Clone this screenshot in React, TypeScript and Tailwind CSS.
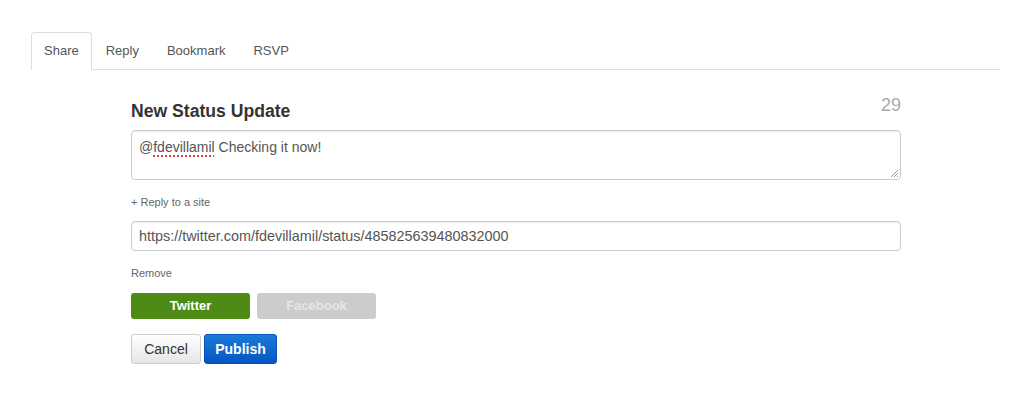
import React from "react";

const tabs = ["Share", "Reply", "Bookmark", "RSVP"];

export default function App() {
  return (
    <div
      className="min-h-[404px] bg-white pl-[31px] pr-[23px] pt-[32px] text-[#333]"
      style={{ fontFamily: '"Liberation Sans", Arial, sans-serif' }}
    >
      <ul className="flex border-b border-[#ddd]">
        {tabs.map((t, i) => (
          <li
            key={t}
            className={
              i === 0
                ? "-mb-px rounded-t-[4px] border border-[#ddd] border-b-white bg-white px-[12px] pb-[10px] pt-[10px] text-[13px] leading-[16px] text-[#555]"
                : "-mb-px border border-transparent px-[13px] pb-[10px] pt-[10px] text-[13px] leading-[16px] text-[#555]"
            }
          >
            {t}
          </li>
        ))}
      </ul>

      <div className="ml-[100px] w-[770px] pt-[25px]">
        <div className="flex items-start justify-between">
          <h2 className="mt-[6px] text-[17.6px] font-bold leading-[20px] text-[#333]">
            New Status Update
          </h2>
          <span className="text-[18px] font-light leading-[20px] text-[#aaa]">29</span>
        </div>

        <div className="relative mt-[9px] h-[50px] rounded-[4px] border border-[#ccc] bg-white px-[7px] pt-[6px] text-[14px] leading-[20px] text-[#555] shadow-[inset_0_1px_1px_rgba(0,0,0,0.075)]">
          @
          <span className="underline decoration-[#e04040] decoration-dotted decoration-2 underline-offset-[3px]">
            fdevillamil
          </span>{" "}
          Checking it now!
          <svg className="absolute bottom-[1px] right-[1px]" width="9" height="9" viewBox="0 0 9 9">
            <path d="M8 1L1 8M8 4L4 8M8 7L7 8" stroke="#999" strokeWidth="1" />
          </svg>
        </div>

        <div className="mt-[15px] text-[11px] leading-[14px] text-[#666]">+ Reply to a site</div>

        <div className="mt-[12px] h-[30px] rounded-[4px] border border-[#ccc] bg-white px-[7px] text-[14.4px] leading-[28px] text-[#555] shadow-[inset_0_1px_1px_rgba(0,0,0,0.075)]">
          https://twitter.com/fdevillamil/status/485825639480832000
        </div>

        <div className="mt-[15px] text-[11px] leading-[14px] text-[#666]">Remove</div>

        <div className="mt-[13px] flex gap-[7px]">
          <button className="h-[26px] w-[119px] rounded-[3px] bg-[#4e8b16] text-[13px] font-bold text-white">
            Twitter
          </button>
          <button className="h-[26px] w-[119px] rounded-[3px] bg-[#cccccc] text-[13px] font-bold text-[#e6e6e6]">
            Facebook
          </button>
        </div>

        <div className="mt-[15px] flex gap-[3px]">
          <button className="h-[30px] w-[70px] rounded-[3px] border border-[#ccc] bg-gradient-to-b from-white to-[#e6e6e6] text-[14px] text-[#333]">
            Cancel
          </button>
          <button className="h-[30px] w-[73px] rounded-[3px] border border-[#0553b8] bg-gradient-to-b from-[#1b7ad8] to-[#0556c4] text-[14px] font-bold text-white">
            Publish
          </button>
        </div>
      </div>
    </div>
  );
}
